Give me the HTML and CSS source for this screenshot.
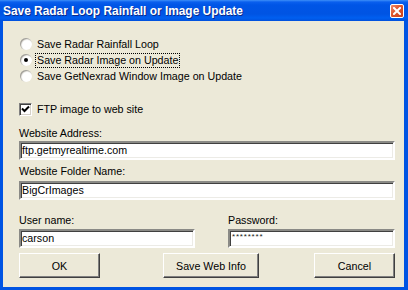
FILE: index.html
```html
<!DOCTYPE html>
<html>
<head>
<meta charset="utf-8">
<link rel="stylesheet" href="styles.css">
</head>
<body>
<div class="window">
  <div class="titlebar">
    <span class="title">Save Radar Loop Rainfall or Image Update</span>
    <span class="close"><svg width="8" height="8" viewBox="0 0 8 8"><path d="M1 1L7 7M7 1L1 7" stroke="#fff" stroke-width="2" stroke-linecap="square"/></svg></span>
  </div>
  <div class="main">
    <div class="options">
      <div class="opt"><span class="radio"></span><span class="lbl">Save Radar Rainfall Loop</span></div>
      <div class="opt"><span class="radio checked"></span><span class="lbl focus">Save Radar Image on Update</span></div>
      <div class="opt"><span class="radio"></span><span class="lbl">Save GetNexrad Window Image on Update</span></div>
    </div>
    <div class="opt check-row"><span class="check"><svg width="9" height="9" viewBox="0 0 9 9"><path d="M1 3.5L3.5 6L8 1.5" stroke="#000" stroke-width="2" fill="none"/></svg></span><span class="lbl">FTP image to web site</span></div>
    <div class="label first">Website Address:</div>
    <div class="field">ftp.getmyrealtime.com</div>
    <div class="label second">Website Folder Name:</div>
    <div class="field second-field">BigCrImages</div>
    <div class="pair">
      <div class="col">
        <div class="label">User name:</div>
        <div class="field">carson</div>
      </div>
      <div class="col">
        <div class="label">Password:</div>
        <div class="field pw">********</div>
      </div>
    </div>
    <div class="buttons">
      <div class="btn ok">OK</div>
      <div class="btn save">Save Web Info</div>
      <div class="btn cancel">Cancel</div>
    </div>
  </div>
</div>
</body>
</html>
```
FILE: styles.css
```css
html, body {
  margin: 0;
  padding: 0;
}
body {
  font-family: "Liberation Sans", Arial, sans-serif;
  font-size: 10.7px;
  color: #000;
}
.window {
  width: 408px;
  height: 290px;
  box-sizing: border-box;
  background: #0054e3;
  display: flex;
  flex-direction: column;
}
.titlebar {
  height: 21px;
  flex: none;
  display: flex;
  align-items: center;
  justify-content: space-between;
  padding: 0 4px 0 3px;
  background: linear-gradient(to bottom, #3d8ff8 0px, #0a5fee 2px, #0055e6 5px, #0054e3 14px, #005ff0 18px, #0050dc 21px);
}
.title {
  color: #fff;
  font-weight: bold;
  font-size: 11.9px;
  text-shadow: 1px 1px 0 #0a2a8a;
  padding-top: 1px;
}
.close {
  width: 12px;
  height: 12px;
  border: 1px solid #fff;
  border-radius: 2px;
  background: linear-gradient(135deg, #f08a6a 0%, #e0552c 45%, #c9401a 100%);
  display: flex;
  align-items: center;
  justify-content: center;
  margin-top: 1px;
}
.main {
  flex: 1;
  margin: 0 4px 3px 3px;
  background: #ece9d8;
  padding: 15px 9px 0 16px;
  display: flex;
  flex-direction: column;
}
.opt {
  height: 16px;
  display: flex;
  align-items: center;
  gap: 5px;
}
.radio {
  width: 12px;
  height: 12px;
  border-radius: 50%;
  margin-left: 1px;
  box-sizing: border-box;
  background: radial-gradient(circle at 60% 60%, #ffffff 0%, #ffffff 45%, #e8e6de 70%, #bdbab0 100%);
  box-shadow: inset 1px 1px 1px #9c9a94;
  position: relative;
}
.radio.checked::after {
  content: "";
  position: absolute;
  left: 4px;
  top: 4px;
  width: 4px;
  height: 4px;
  border-radius: 50%;
  background: #000;
}
.lbl {
  line-height: 13px;
}
.focus {
  outline: 1px dotted #000;
  outline-offset: 0;
  padding: 0 1px;
  margin-left: -1px;
}
.check-row {
  margin-top: 17px;
}
.check {
  width: 13px;
  height: 13px;
  box-sizing: border-box;
  background: #fff;
  border: 1px solid;
  border-color: #808080 #fff #fff #808080;
  box-shadow: inset 1px 1px 0 #404040, inset -1px -1px 0 #d4d0c8;
  display: flex;
  align-items: center;
  justify-content: center;
}
.label {
  height: 14px;
  line-height: 14px;
}
.label.first {
  margin-top: 9px;
}
.label.second {
  margin-top: 4px;
}
.field {
  height: 19px;
  line-height: 15px;
  box-sizing: border-box;
  background: #fff;
  border: 2px solid;
  border-color: #8a8a86 #ffffff #ffffff #8a8a86;
  box-shadow: inset 1px 1px 0 #404040, inset -1px -1px 0 #ecebe6;
  padding: 0 1px;
  margin-top: 1px;
}
.field.second-field {
  margin-top: 3px;
}
.pw {
  font-size: 8px;
  letter-spacing: 0.8px;
  line-height: 8px;
  padding-top: 2px;
  padding-left: 2px;
  color: #222;
}
.pair {
  margin-top: 13px;
  display: grid;
  grid-template-columns: 176px 1fr;
  column-gap: 33px;
}
.pair .field {
  margin-top: 2px;
}
.buttons {
  margin-top: 5px;
  display: flex;
}
.btn {
  height: 25px;
  box-sizing: border-box;
  border: 1px solid;
  border-color: #ffffff #404040 #404040 #ffffff;
  box-shadow: inset -1px -1px 0 #808080;
  background: #ece9d8;
  display: flex;
  align-items: center;
  justify-content: center;
}
.ok {
  width: 81px;
}
.save {
  width: 96px;
  margin-left: 63px;
}
.cancel {
  width: 81px;
  margin-left: auto;
}
```
